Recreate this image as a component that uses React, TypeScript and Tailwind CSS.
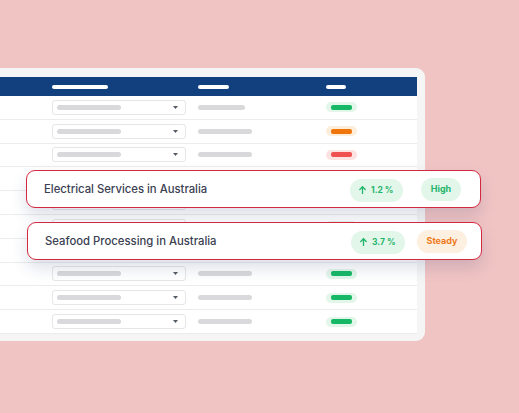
import React from "react";

type Row = { bar: number; status: "green" | "orange" | "red" };

const rows: Row[] = [
  { bar: 47, status: "green" },
  { bar: 54, status: "orange" },
  { bar: 54, status: "red" },
  { bar: 54, status: "green" },
  { bar: 54, status: "green" },
  { bar: 54, status: "green" },
  { bar: 54, status: "green" },
  { bar: 54, status: "green" },
  { bar: 54, status: "green" },
  { bar: 54, status: "green" },
];

const statusStyles = {
  green: { bg: "bg-[#e2f6e9]", bar: "bg-[#16b866]" },
  orange: { bg: "bg-[#fdeedc]", bar: "bg-[#f0760b]" },
  red: { bg: "bg-[#fde2e2]", bar: "bg-[#f04f4f]" },
};

function Caret() {
  return (
    <svg width="5" height="3" viewBox="0 0 5 3" className="mr-[7px]">
      <path d="M0 0h5L2.5 3z" fill="#555b66" />
    </svg>
  );
}

function TableRow({ row }: { row: Row }) {
  const s = statusStyles[row.status];
  return (
    <div className="flex h-[23.8px] items-center border-b border-[#ececec] bg-white">
      <div className="w-[84px] shrink-0" />
      <div className="flex h-[15px] w-[134px] shrink-0 items-center justify-between rounded-[3px] border border-[#e6e6e6] bg-white pl-[4px]">
        <div className="h-[5px] w-[64px] rounded-full bg-[#d9d9db]" />
        <Caret />
      </div>
      <div className="w-[12px] shrink-0" />
      <div className="w-[128px] shrink-0">
        <div className="h-[5px] rounded-full bg-[#d9d9db]" style={{ width: row.bar }} />
      </div>
      <div className={`flex h-[10px] w-[31px] items-center justify-center rounded-full ${s.bg}`}>
        <div className={`h-[5px] w-[21px] rounded-[2px] ${s.bar}`} />
      </div>
    </div>
  );
}

function ArrowUp() {
  return (
    <svg width="7" height="8" viewBox="0 0 7 8" fill="none" stroke="#1fb56a" strokeWidth="1.3" strokeLinecap="round" strokeLinejoin="round">
      <path d="M3.5 7.4V0.8" />
      <path d="M0.8 3.5l2.7-2.7 2.7 2.7" />
    </svg>
  );
}

function Card({ title, change, level, orange, left, top }: { title: string; change: string; level: string; orange?: boolean; left: number; top: number }) {
  return (
    <div
      className="absolute flex h-[38px] w-[455px] items-center rounded-[9px] border border-[#d3283f] bg-white pl-[17px] pr-[9px] shadow-[0_8px_16px_rgba(40,60,110,0.16)]"
      style={{ left, top }}
    >
      <div className="flex-1 text-[11.3px] font-medium text-[#3a4052]">{title}</div>
      <div className="w-[61px] shrink-0">
        <div className="inline-flex h-[23px] items-center gap-[5px] rounded-full bg-[#e3f6ea] px-[9px] text-[8.5px] font-bold text-[#1fb56a]">
          <ArrowUp />
          <span>{change}</span>
        </div>
      </div>
      <div className="flex w-[60px] shrink-0 justify-center">
        <div
          className={`flex h-[23px] items-center rounded-full px-[10px] text-[9px] font-bold ${
            orange ? "bg-[#fdf0e0] text-[#ef7a1c]" : "bg-[#e3f6ea] text-[#1fb56a]"
          }`}
        >
          {level}
        </div>
      </div>
    </div>
  );
}

export default function App() {
  return (
    <div
      className="relative h-[413px] w-[519px] overflow-hidden bg-[#f1c4c4] pt-[68px]"
      style={{ fontFamily: "Inter, 'Noto Sans', sans-serif" }}
    >
      <div className="ml-[-40px] w-[465px] rounded-[9px] bg-[#f5f5f5] pb-[7px] pl-[8px] pr-[8px] pt-[9px]">
        <div className="flex h-[19px] items-center bg-[#12407f]">
          <div className="w-[84px] shrink-0" />
          <div className="h-[4px] w-[56px] rounded-full bg-white" />
          <div className="w-[90px] shrink-0" />
          <div className="h-[4px] w-[31px] rounded-full bg-white" />
          <div className="w-[97px] shrink-0" />
          <div className="h-[4px] w-[20px] rounded-full bg-white" />
        </div>
        {rows.map((r, i) => (
          <TableRow key={i} row={r} />
        ))}
      </div>

      <Card title="Electrical Services in Australia" change="1.2 %" level="High" left={26} top={170} />
      <Card title="Seafood Processing in Australia" change="3.7 %" level="Steady" orange left={27} top={222} />
    </div>
  );
}
